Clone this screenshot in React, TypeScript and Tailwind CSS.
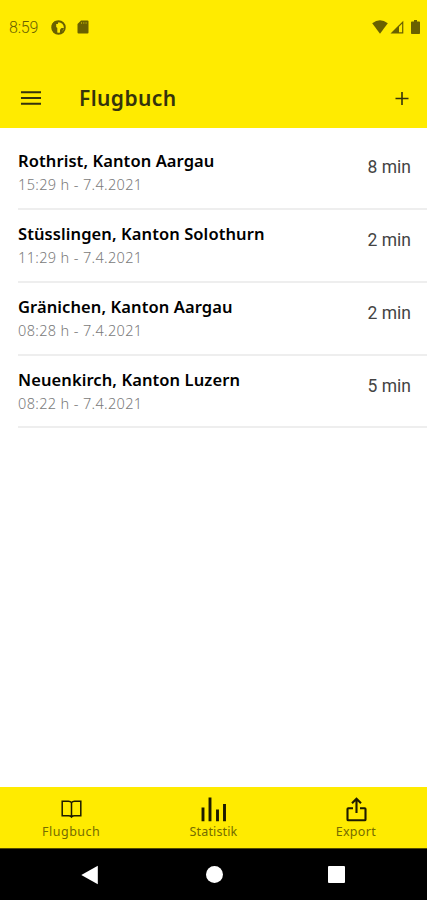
interface Flight {
  place: string;
  start: string;
  duration: string;
}

const flights: Flight[] = [
  { place: 'Rothrist, Kanton Aargau', start: '15:29 h - 7.4.2021', duration: '8 min' },
  { place: 'Stüsslingen, Kanton Solothurn', start: '11:29 h - 7.4.2021', duration: '2 min' },
  { place: 'Gränichen, Kanton Aargau', start: '08:28 h - 7.4.2021', duration: '2 min' },
  { place: 'Neuenkirch, Kanton Luzern', start: '08:22 h - 7.4.2021', duration: '5 min' },
];

function StatusBar() {
  return (
    <div className="flex h-[54px] items-center justify-between pl-[9px] pr-[7px] text-[#696000]">
      <div className="flex items-center">
        <span className="w-[42px] pt-px font-['Roboto',sans-serif] text-[16px] leading-5 font-light tracking-[-0.2px]">8:59</span>
        <svg width="15" height="15" viewBox="0 0 15 15" fill="none">
          <circle cx="7.5" cy="7.5" r="6.3" stroke="currentColor" strokeWidth="1.9" />
          <path d="M1 4L4 1L7.5 1.5L6.8 4H5.2V7L6.3 8V13L4 13L1 9Z" fill="currentColor" />
          <path d="M9 9.5L10.5 8H13L11 12L9 13.5Z" fill="currentColor" />
        </svg>
        <svg className="ml-[11px]" width="12" height="14" viewBox="0 0 12 14">
          <path d="M4 0.5H10.5Q11.5 0.5 11.5 1.5V12.5Q11.5 13.5 10.5 13.5H1.5Q0.5 13.5 0.5 12.5V4Z" fill="currentColor" />
          <path d="M4.5 2V4M6.8 2V4M9.1 2V4" stroke="#a89c00" strokeWidth="1" />
        </svg>
      </div>
      <div className="flex items-center">
        <svg width="16" height="14" viewBox="0 0 16 14">
          <path d="M0.2 3.3Q8 -2.6 15.8 3.3L8 13.7Z" fill="currentColor" />
        </svg>
        <svg className="ml-[2px]" width="14" height="14" viewBox="0 0 14 14">
          <path d="M0.5 13.5L13.3 0.8V13.5Z" fill="currentColor" />
          <path d="M9 6.8L12.1 3.7V12.3H9Z" fill="#ffeb00" />
        </svg>
        <svg className="ml-[7px]" width="9" height="14" viewBox="0 0 9 14">
          <path d="M3 0H6V1.4H8.2Q9 1.4 9 2.2V13.2Q9 14 8.2 14H0.8Q0 14 0 13.2V2.2Q0 1.4 0.8 1.4H3Z" fill="currentColor" />
        </svg>
      </div>
    </div>
  );
}

function AppBar() {
  return (
    <div className="flex h-[74px] items-center pt-[14px] pl-[21px] pr-[18px] text-[#35330c]">
      <button aria-label="Menu" className="w-[58px]">
        <svg width="20" height="16" viewBox="0 0 20 16" stroke="currentColor" strokeWidth="1.9">
          <path d="M0 2.3H20M0 8H20M0 13.7H20" />
        </svg>
      </button>
      <h1 className="font-['Noto_Sans',sans-serif] text-[21px] leading-7 font-semibold tracking-[0.4px]">Flugbuch</h1>
      <button aria-label="Add" className="ml-auto">
        <svg width="14" height="14" viewBox="0 0 14 14" stroke="currentColor" strokeWidth="1.6">
          <path d="M0.5 7.5H13.5M7 1V14" />
        </svg>
      </button>
    </div>
  );
}

function FlightRow({ flight }: { flight: Flight }) {
  return (
    <li className="ml-[18px] flex h-[72.8px] justify-between border-b-2 border-[#eeeeee] pr-[16px] pt-[12px]">
      <div className="whitespace-nowrap">
        <div className="font-['Noto_Sans',sans-serif] text-[16.5px] leading-[23px] font-semibold tracking-[0.09px] text-black">{flight.place}</div>
        <div className="font-['Noto_Sans',sans-serif] text-[14.5px] leading-[24px] font-light tracking-[0.36px] text-[#7a7a7a]">{flight.start}</div>
      </div>
      <div className="pt-[6px] font-['Roboto',sans-serif] text-[17.5px] leading-6 text-[#444444]">{flight.duration}</div>
    </li>
  );
}

function TabBar() {
  const label = "font-['Noto_Sans',sans-serif] text-[12.5px] leading-4 text-[#756c00]";
  return (
    <nav className="grid h-[62.5px] grid-cols-3 border-b border-[#554e00] bg-[#ffeb00] pt-[9px] text-[#1d1b00]">
      <button className="flex flex-col items-center">
        <svg width="28" height="28" viewBox="0 0 28 28" fill="none" stroke="currentColor" strokeWidth="1.5">
          <path d="M14.5 6.6Q13.5 5.2 11.5 5.2H5.2V19.8H11.5Q13.5 19.8 14.5 21Q15.5 19.8 17.5 19.8H23.8V5.2H17.5Q15.5 5.2 14.5 6.6ZM14.5 6.2V21.4" />
        </svg>
        <span className={`${label} tracking-[0.5px]`}>Flugbuch</span>
      </button>
      <button className="flex flex-col items-center">
        <svg width="28" height="28" viewBox="0 0 28 28" stroke="currentColor" strokeWidth="2.9">
          <path d="M4 11.5V25.2M11 1.5V25.2M18.5 13.5V25.2M25.5 8V25.2" />
        </svg>
        <span className={`${label} tracking-[0.15px]`}>Statistik</span>
      </button>
      <button className="flex flex-col items-center">
        <svg width="28" height="28" viewBox="0 0 28 28" fill="none" stroke="currentColor" strokeWidth="2.1">
          <path d="M11 12.3H6.3Q5.5 12.3 5.5 13.1V23.4Q5.5 24.2 6.3 24.2H22.7Q23.5 24.2 23.5 23.4V13.1Q23.5 12.3 22.7 12.3H18M14.5 17V2.8M10 7.3L14.5 2.8L19 7.3" />
        </svg>
        <span className={`${label} tracking-[0.3px]`}>Export</span>
      </button>
    </nav>
  );
}

function SystemNav() {
  return (
    <div className="flex h-[51px] items-center justify-between bg-black pl-[81px] pr-[82px] text-white">
      <svg width="18" height="20" viewBox="0 0 18 20" fill="currentColor">
        <path d="M0.3 10L16.8 0.8V19.2Z" />
      </svg>
      <div className="ml-px h-[17px] w-[17px] rounded-full bg-white" />
      <div className="h-[17px] w-[17px] rounded-[1px] bg-white" />
    </div>
  );
}

export default function App() {
  return (
    <div className="flex h-[900px] w-full flex-col overflow-hidden bg-white">
      <header className="bg-[#ffeb00]">
        <StatusBar />
        <AppBar />
      </header>
      <ul className="flex-1 pt-[9.3px]">
        {flights.map((flight) => (
          <FlightRow key={flight.start} flight={flight} />
        ))}
      </ul>
      <TabBar />
      <SystemNav />
    </div>
  );
}
